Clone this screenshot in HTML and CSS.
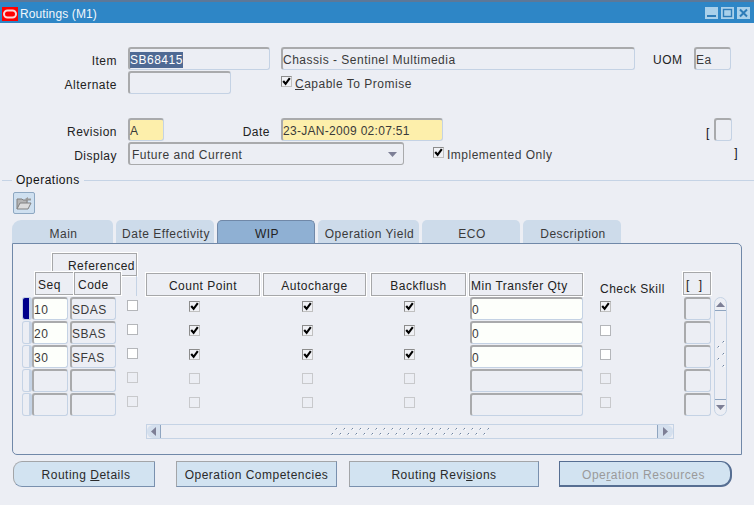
FILE: index.html
```html
<!DOCTYPE html>
<html lang="en">
<head>
<meta charset="utf-8">
<title>Routings (M1)</title>
<link rel="stylesheet" href="styles.css">
</head>
<body>
<svg class="defs" width="0" height="0" aria-hidden="true">
  <symbol id="tick" viewBox="0 0 9 9"><path d="M1.2 4 L3.6 6.8 L7.8 1.2" fill="none" stroke="#000" stroke-width="2.1"/></symbol>
  <pattern id="grip" width="8" height="7" patternUnits="userSpaceOnUse">
    <rect x="5" y="0" width="1" height="1" fill="#6f83a0"/><rect x="4" y="1" width="1" height="1" fill="#a9b7ca"/><rect x="6" y="1" width="1" height="1" fill="#fff"/>
    <rect x="1" y="5" width="1" height="1" fill="#6f83a0"/><rect x="0" y="6" width="1" height="1" fill="#a9b7ca"/><rect x="2" y="6" width="1" height="1" fill="#fff"/>
  </pattern>
  <pattern id="gripv" width="9" height="12" patternUnits="userSpaceOnUse">
    <rect x="7" y="0" width="1" height="1" fill="#6f83a0"/><rect x="6" y="1" width="1" height="1" fill="#a9b7ca"/><rect x="8" y="1" width="1" height="1" fill="#fff"/>
    <rect x="2" y="5" width="1" height="1" fill="#6f83a0"/><rect x="1" y="6" width="1" height="1" fill="#a9b7ca"/><rect x="3" y="6" width="1" height="1" fill="#fff"/>
  </pattern>
</svg>
<main class="window">
  <header class="titlebar">
    <svg class="logo" width="16" height="14" viewBox="0 0 16 14"><rect width="16" height="14" fill="#f00"/><rect x="2" y="3.5" width="12" height="7" rx="3.5" fill="none" stroke="#fbd9d9" stroke-width="2"/></svg>
    <span class="title">Routings (M1)</span>
    <span class="winbtn"><svg width="13" height="12" viewBox="0 0 13 12"><rect x="2" y="8" width="9" height="2" fill="#2e7cb8"/></svg></span>
    <span class="winbtn"><svg width="13" height="12" viewBox="0 0 13 12"><rect x="2.5" y="2.5" width="8" height="7" fill="none" stroke="#2e7cb8" stroke-width="1.4"/></svg></span>
    <span class="winbtn"><svg width="13" height="12" viewBox="0 0 13 12"><path d="M3 2.5 L10 9.5 M10 2.5 L3 9.5" stroke="#2e7cb8" stroke-width="2"/></svg></span>
  </header>

  <section class="form">
    <div class="form-row">
      <label class="lbl">Item</label>
      <div class="fld w142"><span class="sel">SB68415</span></div>
      <div class="fld w354 ml11">Chassis - Sentinel Multimedia</div>
      <label class="lbl-uom">UOM</label>
      <div class="fld w37 ml11">Ea</div>
    </div>
    <div class="form-row">
      <label class="lbl">Alternate</label>
      <div class="fld w103"></div>
      <span class="ck on ml50"><svg width="9" height="9"><use href="#tick"/></svg></span>
      <span class="cap"><u>C</u>apable To Promise</span>
    </div>
    <div class="form-row mt24">
      <label class="lbl">Revision</label>
      <div class="fld w36 yellow">A</div>
      <label class="lbl-date">Date</label>
      <div class="fld w162 yellow ml11 tight">23-JAN-2009 02:07:51</div>
      <span class="brk brk-open">[</span>
      <div class="fld w18"></div>
    </div>
    <div class="form-row">
      <label class="lbl">Display</label>
      <div class="fld select"><span class="select-text">Future and Current</span><svg class="caret" width="9" height="5"><path d="M0 0H9L4.5 5Z" fill="#7d7f96"/></svg></div>
      <span class="ck on ml29"><svg width="9" height="9"><use href="#tick"/></svg></span>
      <span class="cap">Implemented Only</span>
      <span class="brk brk-close">]</span>
    </div>
  </section>

  <div class="legend"><span>Operations</span></div>
  <button class="folder" aria-label="Open">
    <svg width="16" height="14" viewBox="0 0 16 14"><path d="M1 13V3H6L7 4H11V7" fill="#b5b5b5" stroke="#808080"/><path d="M1 13L4 7H15L12 13Z" fill="#dcdcdc" stroke="#808080"/><path d="M9 3L12 1V2.5H15V4.5H12V6Z" fill="#999"/></svg>
  </button>

  <nav class="tabs">
    <span class="tab first">Main</span>
    <span class="tab w98">Date Effectivity</span>
    <span class="tab w98 active">WIP</span>
    <span class="tab">Operation Yield</span>
    <span class="tab w98">ECO</span>
    <span class="tab w98">Description</span>
  </nav>

  <section class="panel">
    <div class="head">
      <div class="hd h-ref">Referenced</div>
      <div class="h-line"></div>
      <div class="hd h-seq">Seq</div>
      <div class="hd h-code">Code</div>
      <div class="hd h-count">Count Point</div>
      <div class="hd h-auto">Autocharge</div>
      <div class="hd h-back">Backflush</div>
      <div class="hd h-min">Min Transfer Qty</div>
      <div class="h-skill">Check Skill</div>
      <div class="hd h-brk">[ ]</div>
    </div>
    <div class="body">
      <div class="rows">
        <div class="row">
          <span class="ind cur"></span>
          <div class="fld cell-seq white">10</div><div class="fld cell-code">SDAS</div>
          <span class="ck c1"></span>
          <span class="ck on c2"><svg width="9" height="9"><use href="#tick"/></svg></span>
          <span class="ck on c3"><svg width="9" height="9"><use href="#tick"/></svg></span>
          <span class="ck on c4"><svg width="9" height="9"><use href="#tick"/></svg></span>
          <div class="fld cell-min white">0</div>
          <span class="ck on c5"><svg width="9" height="9"><use href="#tick"/></svg></span>
          <div class="fld cell-last"></div>
        </div>
        <div class="row">
          <span class="ind"></span>
          <div class="fld cell-seq white">20</div><div class="fld cell-code">SBAS</div>
          <span class="ck c1"></span>
          <span class="ck on c2"><svg width="9" height="9"><use href="#tick"/></svg></span>
          <span class="ck on c3"><svg width="9" height="9"><use href="#tick"/></svg></span>
          <span class="ck on c4"><svg width="9" height="9"><use href="#tick"/></svg></span>
          <div class="fld cell-min white">0</div>
          <span class="ck c5"></span>
          <div class="fld cell-last"></div>
        </div>
        <div class="row">
          <span class="ind"></span>
          <div class="fld cell-seq white">30</div><div class="fld cell-code">SFAS</div>
          <span class="ck c1"></span>
          <span class="ck on c2"><svg width="9" height="9"><use href="#tick"/></svg></span>
          <span class="ck on c3"><svg width="9" height="9"><use href="#tick"/></svg></span>
          <span class="ck on c4"><svg width="9" height="9"><use href="#tick"/></svg></span>
          <div class="fld cell-min white">0</div>
          <span class="ck c5"></span>
          <div class="fld cell-last"></div>
        </div>
        <div class="row">
          <span class="ind"></span>
          <div class="fld cell-seq"></div><div class="fld cell-code"></div>
          <span class="ck off c1"></span><span class="ck off c2"></span><span class="ck off c3"></span><span class="ck off c4"></span>
          <div class="fld cell-min"></div>
          <span class="ck off c5"></span>
          <div class="fld cell-last"></div>
        </div>
        <div class="row">
          <span class="ind"></span>
          <div class="fld cell-seq"></div><div class="fld cell-code"></div>
          <span class="ck off c1"></span><span class="ck off c2"></span><span class="ck off c3"></span><span class="ck off c4"></span>
          <div class="fld cell-min"></div>
          <span class="ck off c5"></span>
          <div class="fld cell-last"></div>
        </div>
      </div>
      <div class="vscroll">
        <span class="v-cap top"><svg width="9" height="5"><path d="M0 5H9L4.5 0Z" fill="#7d7f96"/></svg></span>
        <svg class="v-grip" width="9" height="28"><rect width="9" height="28" fill="url(#gripv)"/></svg>
        <span class="v-cap bottom"><svg width="9" height="5"><path d="M0 0H9L4.5 5Z" fill="#7d7f96"/></svg></span>
      </div>
    </div>
    <div class="hscroll">
      <span class="h-cap left"><svg width="5" height="9"><path d="M5 0V9L0 4.5Z" fill="#7d7f96"/></svg></span>
      <svg class="h-grip" width="164" height="7"><rect width="164" height="7" fill="url(#grip)"/></svg>
      <span class="h-cap right"><svg width="5" height="9"><path d="M0 0V9L5 4.5Z" fill="#7d7f96"/></svg></span>
    </div>
  </section>

  <footer class="actions">
    <button class="btn b1">Routing <u>D</u>etails</button>
    <button class="btn b2">Operation Competencies</button>
    <button class="btn b3">Routing Revi<u>s</u>ions</button>
    <button class="btn b4">Ope<u>r</u>ation Resources</button>
  </footer>
</main>
</body>
</html>
```
FILE: styles.css
```css
* { box-sizing: border-box; }
html, body { margin: 0; padding: 0; }
body {
  width: 754px; height: 505px; overflow: hidden;
  background: #eceef4; color: #222;
  font: 12px/14px "Liberation Sans", Arial, sans-serif;
  letter-spacing: .5px;
}
.defs { position: absolute; }
.window { width: 754px; height: 505px; display: flex; flex-direction: column; }

/* Title bar */
.titlebar {
  height: 23px; padding: 5px 4px 0 2px;
  display: flex; align-items: flex-start;
  background: #2e86c6; border-top: 2px solid #5d7898;
}
.logo { flex: none; }
.title { margin-left: 2px; margin-right: auto; color: #f1f6fb; line-height: 14px; letter-spacing: .12px; }
.winbtn { width: 13px; height: 12px; margin-left: 3px; background: #a9d0ea; display: block; }
.winbtn svg { display: block; }

/* Header form */
.form { padding-top: 24px; }
.form-row { display: flex; align-items: center; height: 23px; margin-bottom: 1px; }
.mt24 { margin-top: 24px; }
.lbl { width: 117px; margin-right: 11px; text-align: right; margin-top: 4px; }
.lbl-uom { width: 30px; margin-left: 18px; margin-top: 2px; }
.lbl-date { width: 106px; text-align: right; margin-top: 4px; }
.fld {
  height: 23px; padding: 3px 0 0 0; flex: none;
  border: 1px solid #c4d2e4; border-top: 2px solid #a9aaac; border-left: 2px solid #a9aaac;
  border-radius: 3px; color: #3a3a3a; white-space: nowrap; line-height: 16px;
}
.w142 { width: 142px; } .w354 { width: 354px; } .w37 { width: 37px; } .w103 { width: 103px; }
.w36 { width: 36px; } .w162 { width: 162px; } .w18 { width: 18px; }
.ml11 { margin-left: 11px; } .ml50 { margin-left: 50px; } .ml29 { margin-left: 29px; }
.sel { background: #4f6a94; color: #fff; display: inline-block; }
.yellow { background: #fdefab; }
.tight { letter-spacing: .3px; }
.white { background: #fdfffb; }
.select { width: 276px; display: flex; align-items: center; justify-content: space-between; padding: 0 6px 0 2px; border-color: #a9aaac; }
.select-text { margin-top: 2px; }
.caret { flex: none; }
.cap { margin-left: 3px; margin-top: 3px; color: #3a3a3a; }
.brk { color: #111; }
.brk-open { margin-left: 263px; margin-right: 4px; margin-top: 6px; }
.brk-close { margin-left: auto; margin-right: 16px; margin-top: -2px; }

/* Check box */
.ck {
  width: 11px; height: 11px; flex: none; display: flex; align-items: center; justify-content: center;
  background: #fff; border: 1px solid #b4b6ba; margin-bottom: 3px;
}
.ck svg { display: block; }
.ck.on { background: #f0f1f5; border-color: #8c8c8c #c0c0c0 #c0c0c0 #8c8c8c; }
.ck.off { background: transparent; border-color: #c8c9cc; }

/* Operations legend */
.legend { margin-top: 7px; display: flex; align-items: center; gap: 4px; height: 14px; color: #111; }
.legend::before { content: ""; width: 10px; margin-left: 2px; border-top: 1px solid #c5d3e5; }
.legend::after { content: ""; flex: 1; border-top: 1px solid #c5d3e5; }
.folder {
  width: 22px; height: 22px; margin: 5px 0 0 13px; padding: 0;
  display: flex; align-items: center; justify-content: center;
  background: #cfe0f0; border: 1px solid #8ea8c2; border-radius: 2px;
}

/* Tabs */
.tabs { display: flex; gap: 3px; margin: 6px 0 0 12px; height: 23px; }
.tab {
  width: 101px; display: flex; align-items: center; justify-content: center; padding: 5px 0 0 2px;
  background: #cddbea; color: #3a3a3a; border-radius: 5px 5px 0 0; white-space: nowrap;
}
.tab.first { border-radius: 9px 5px 0 0; }
.tab.w98 { width: 98px; }
.tab.active { background: #8fb0d3; color: #222; border: 1px solid #7088a8; border-bottom: 0; padding-top: 3px; }

/* Panel */
.panel {
  width: 730px; height: 212px; margin-left: 12px; padding: 9px 0 0 9px;
  border: 1px solid #7088a8; border-radius: 0 5px 0 5px;
}
.head {
  margin-left: 13px; height: 43px; display: grid;
  grid-template-columns: 17px 22px 47px 16px 9px 114px 3px 103px 5px 95px 3px 114px 17px 66px 17px 28px;
  grid-template-rows: 19px 1px 3px 19px 1px;
}
.hd {
  display: flex; align-items: center; justify-content: center; white-space: nowrap; padding-top: 2px;
  border: 1px solid #a6a7a9; outline: 1px solid #fff; color: #222; background: #eceef4;
}
.h-ref { grid-column: 2 / 5; grid-row: 1 / 4; justify-content: flex-end; padding: 2px 1px 0 0; }
.h-line { grid-column: 4; grid-row: 4 / 6; justify-self: end; width: 1px; background: #c5d3e5; }
.h-seq { grid-column: 1 / 3; grid-row: 2 / 5; justify-content: flex-start; padding-left: 2px; }
.h-code { grid-column: 3; grid-row: 2 / 5; justify-content: flex-start; padding-left: 3px; }
.h-count { grid-column: 6; grid-row: 3 / 6; }
.h-auto { grid-column: 8; grid-row: 3 / 6; }
.h-back { grid-column: 10; grid-row: 3 / 6; }
.h-min { grid-column: 12; grid-row: 3 / 6; justify-content: flex-start; padding-left: 1px; }
.h-skill { grid-column: 14; grid-row: 4 / 6; white-space: nowrap; align-self: end; }
.h-brk { grid-column: 16; grid-row: 2 / 5; justify-content: flex-start; padding-left: 2px; letter-spacing: 3px; }

/* Rows */
.body { display: flex; margin-top: 1px; }
.rows { display: flex; flex-direction: column; gap: 1px; }
.row { display: flex; align-items: center; height: 23px; }
.ind { width: 10px; height: 23px; flex: none; border: 1px solid #c5d3e5; border-right-width: 3px; border-radius: 3px; }
.ind.cur { background: #00008b; }
.cell-seq { width: 36px; }
.cell-code { width: 46px; margin-left: 2px; }
.cell-min { width: 113px; margin-left: 55px; }
.cell-last { width: 27px; margin-left: 73px; }
.c1 { margin-left: 11px; margin-bottom: 7px; }
.c2 { margin-left: 51px; margin-bottom: 5px; }
.c3 { margin-left: 102px; margin-bottom: 5px; }
.c4 { margin-left: 91px; margin-bottom: 5px; }
.c5 { margin-left: 17px; margin-bottom: 5px; }

/* Scrollbars */
.vscroll {
  width: 13px; height: 119px; margin-left: 3px;
  display: flex; flex-direction: column; align-items: center; justify-content: space-between;
  border: 1px solid #c5d3e5; border-radius: 7px;
}
.v-cap { width: 100%; height: 13px; display: flex; align-items: center; justify-content: center; }
.v-cap.top { border-bottom: 1px solid #8fa5c0; }
.v-cap.bottom { border-top: 1px solid #8fa5c0; height: 16px; }
.v-grip { display: block; }
.hscroll {
  width: 528px; height: 15px; margin: 8px 0 0 124px;
  display: flex; align-items: center; justify-content: space-between;
  border: 1px solid #c5d3e5;
}
.h-cap { height: 13px; width: 14px; display: flex; align-items: center; justify-content: center; background: #d5e0ee; }
.h-cap.left { border-right: 1px solid #8fa5c0; border-radius: 6px 0 0 6px; }
.h-cap.right { border-left: 1px solid #8fa5c0; border-radius: 0 6px 6px 0; width: 16px; }
.h-grip { display: block; margin-left: 170px; margin-right: 168px; }

/* Buttons */
.actions { display: flex; margin: 6px 0 0 13px; }
.btn {
  height: 26px; padding: 2px 0 0; font: inherit; letter-spacing: inherit; color: #2a2a2a;
  background: #d2e3f1; white-space: nowrap;
  border: 1px solid #7990ae; border-top-color: #a3a5a8; border-left-color: #a3a5a8;
}
.b1 { width: 142px; padding-left: 4px; border-radius: 9px 0 0 9px; }
.b2 { width: 161px; margin-left: 21px; }
.b3 { width: 190px; margin-left: 12px; }
.b4 { width: 173px; margin-left: 20px; padding-right: 3px; color: #9a9a9a; border: 2px solid #566e92; border-left-width: 1px; border-top-width: 1px; border-radius: 0 11px 11px 0; }
```
